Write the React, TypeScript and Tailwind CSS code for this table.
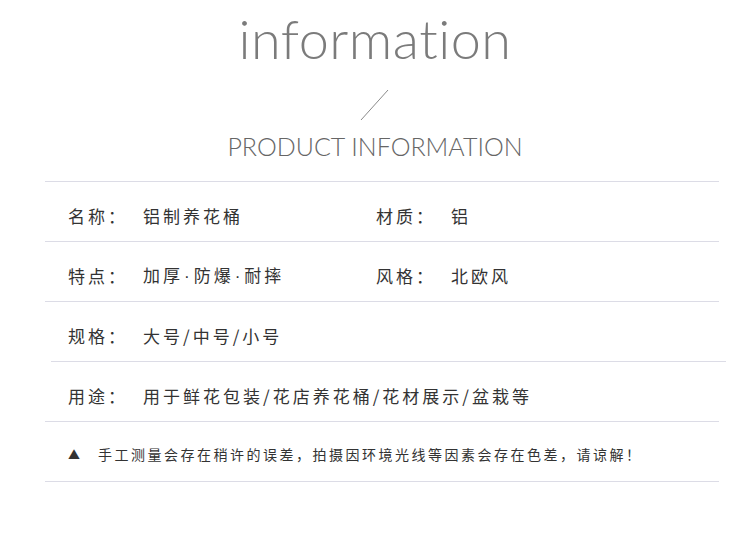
const cjk = { fontFamily: '"Noto Sans CJK SC", "Noto Sans", sans-serif' }
const latin = { fontFamily: '"Liberation Sans", sans-serif' }

type Cell = { label: string; value: string }

const rows: Cell[][] = [
  [
    { label: '名称：', value: '铝制养花桶' },
    { label: '材质：', value: '铝' },
  ],
  [
    { label: '特点：', value: '加厚·防爆·耐摔' },
    { label: '风格：', value: '北欧风' },
  ],
  [{ label: '规格：', value: '大号/中号/小号' }],
  [{ label: '用途：', value: '用于鲜花包装/花店养花桶/花材展示/盆栽等' }],
]

// the middle dot is half-width in the picture, CJK fonts draw it full-width
function withDots(text: string) {
  const parts = text.split('·')
  return parts.map((p, i) => (
    <span key={i}>
      {p}
      {i < parts.length - 1 && <span style={latin} className="px-[1px]">·</span>}
    </span>
  ))
}

function Field({ label, value }: Cell) {
  return (
    <div className="flex items-center">
      <span className="w-[75px] shrink-0 tracking-[3px]">{label}</span>
      <span className="whitespace-nowrap tracking-[3px]">{withDots(value)}</span>
    </div>
  )
}

export default function App() {
  return (
    <div className="w-[750px] h-[534px] bg-white overflow-hidden">
      {/* Heading */}
      <div className="flex flex-col items-center">
        <div
          className="mt-[6px] h-[66px] text-[54px] leading-[66px] font-light text-[#7b7b7b] tracking-[0.5px]"
          style={{ fontFamily: 'Lato, "DejaVu Sans", sans-serif' }}
        >
          information
        </div>
        <svg width="30" height="32" viewBox="0 0 30 32" className="mt-[17px]">
          <line x1="1" y1="31" x2="28" y2="1" stroke="#8a8a8a" strokeWidth="1" />
        </svg>
        <div
          className="mt-[9px] text-[25px] leading-[32px] font-light text-[#666]"
          style={{ fontFamily: 'Lato, "DejaVu Sans", sans-serif' }}
        >
          PRODUCT INFORMATION
        </div>
      </div>

      {/* Spec table */}
      <div className="mt-[19px] text-[17px] text-[#333]" style={cjk}>
        {rows.map((cells, i) => (
          <div key={i} className={i === 3 ? 'ml-[51px] w-[675px]' : 'ml-[45px] w-[674px]'}>
            <div className="h-px bg-[#dcdce6]" />
            <div className={`h-[59px] flex items-center pt-[9px] ${i === 3 ? 'pl-[17px]' : 'pl-[23px]'}`}>
              <div className="w-[308px]">
                <Field {...cells[0]} />
              </div>
              {cells[1] && <Field {...cells[1]} />}
            </div>
          </div>
        ))}

        <div className="ml-[45px] w-[674px]">
          <div className="h-px bg-[#dcdce6]" />
          <div className="h-[59px] flex items-center pl-[23px] pt-[6px] text-[14px] tracking-[2.5px]">
            <span className="text-[12px] w-[30px]">▲</span>
            <span className="whitespace-nowrap">手工测量会存在稍许的误差，拍摄因环境光线等因素会存在色差，请谅解！</span>
          </div>
          <div className="h-px bg-[#dcdce6]" />
        </div>
      </div>
    </div>
  )
}
